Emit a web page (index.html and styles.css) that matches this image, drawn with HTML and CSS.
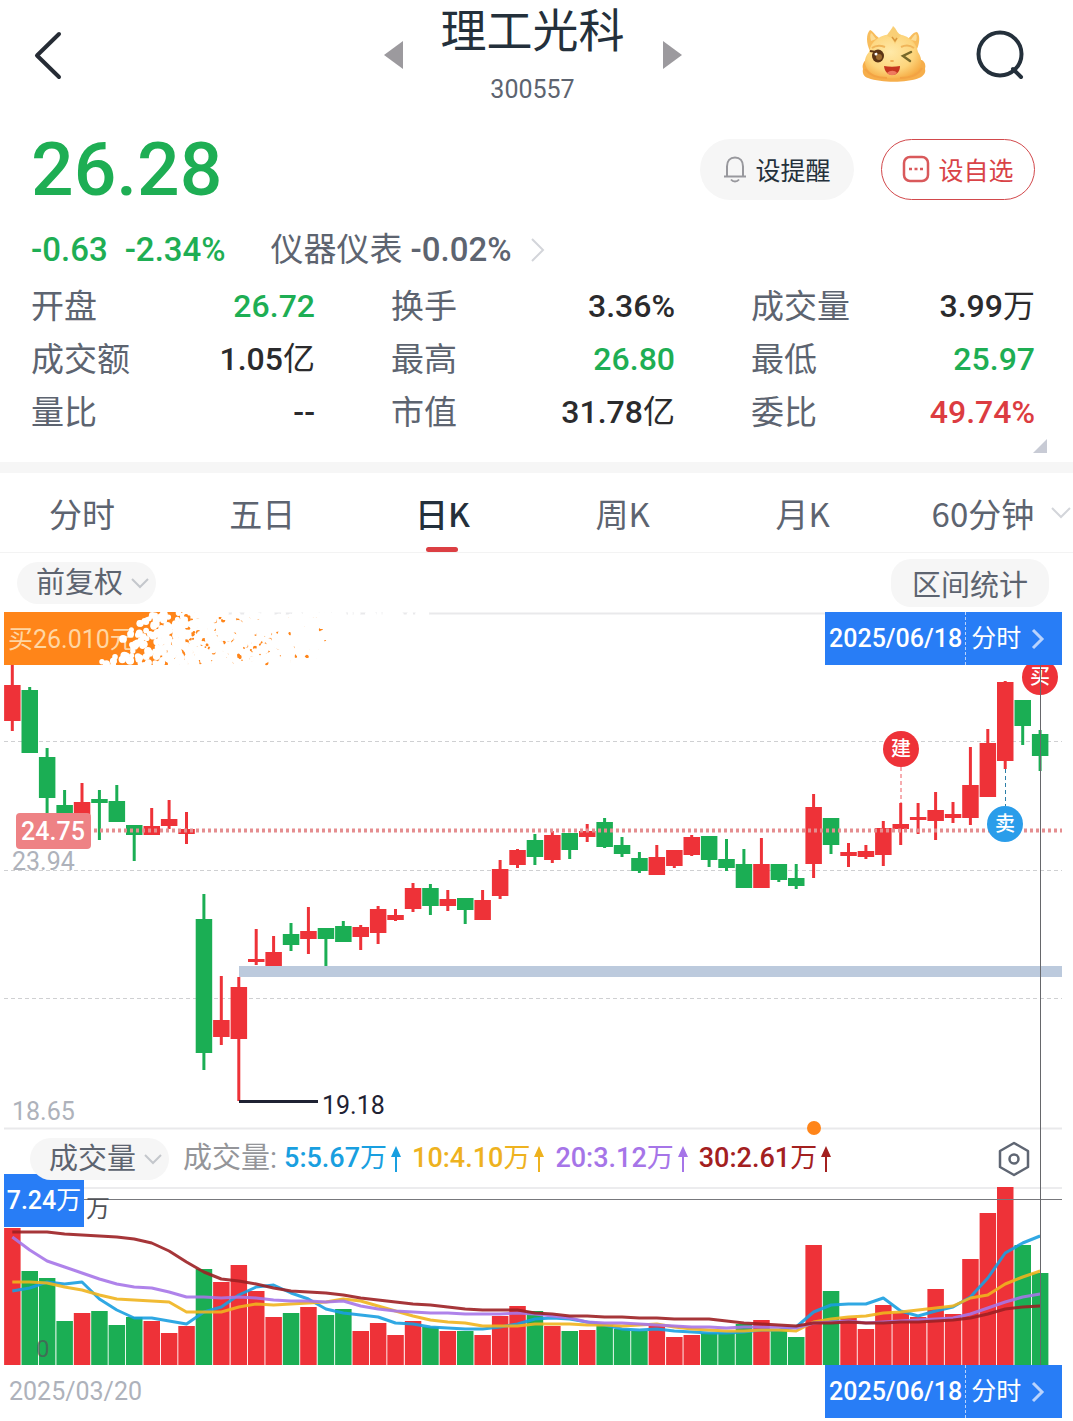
FILE: index.html
```html
<!DOCTYPE html>
<html lang="zh-CN">
<head>
<meta charset="utf-8">
<meta name="viewport" content="width=device-width, initial-scale=1">
<title>理工光科 300557</title>
<link rel="stylesheet" href="styles.css">
</head>
<body>
<header class="topbar">
  <button class="icon-btn back" aria-label="返回">
    <svg width="32" height="52" viewBox="0 0 32 52" fill="none" stroke="#262c35" stroke-width="4" stroke-linecap="round" stroke-linejoin="round"><path d="M27 5 5 26.500 27 48"/></svg>
  </button>
  <div class="stock">
    <button class="icon-btn" aria-label="上一只"><svg width="20" height="28" viewBox="0 0 20 28"><path d="M19 0v28L0 14z" fill="#9c9a9e"/></svg></button>
    <div class="stock-name">
      <h1>理工光科</h1>
      <p>300557</p>
    </div>
    <button class="icon-btn" aria-label="下一只"><svg width="20" height="28" viewBox="0 0 20 28"><path d="M1 0v28l19-14z" fill="#9c9a9e"/></svg></button>
  </div>
  <div class="tools">
    <button class="icon-btn" aria-label="助手">
      <svg width="66" height="62" viewBox="0 0 66 62">
        <defs>
          <radialGradient id="face" cx=".45" cy=".4" r=".65"><stop offset="0" stop-color="#ffe9a8"/><stop offset=".65" stop-color="#fdd57c"/><stop offset="1" stop-color="#f6ac45"/></radialGradient>
        </defs>
        <path d="M9 27C5 19 5 10 9 6c3 1 5 5 9 8l-5 12zM56 25c3-7 3-14 0-17-4 0-6 4-9 7l6 10z" fill="#f8bd5c"/>
        <path d="M10 17c-1-4-1-6 0-8 2 1 3 4 5 6zM55 17c1-3 1-5 0-7-2 1-4 4-5 6z" fill="#fbdc96"/>
        <path d="M5 36c-3 2-4 6-3 9-1 4 1 8 5 9 14 5 38 5 51 0 5-2 7-6 6-9 1-4 0-7-3-9z" fill="#f6ae4b"/>
        <path d="M33 10c13 0 22 7 24 18 5 7 4 16-1 20-6 8-40 9-47 0-6-6-7-13-1-20 2-11 11-18 25-18z" fill="url(#face)"/>
        <path d="M26 12c1-4 4-5 6-10 4 3 3 6 8 9l-4 5-2 4-3-6z" fill="#f9cf76"/>
        <path d="M31 13l3 4 2-3" fill="none" stroke="#d9973d" stroke-width="1.500"/>
        <path d="M11 24c4-3 8-3 13-1M40 23c4-2 9-2 13 1" fill="none" stroke="#f0b55a" stroke-width="2"/>
        <ellipse cx="17" cy="32" rx="6" ry="6.500" fill="#5b3414"/>
        <circle cx="18" cy="33" r="3" fill="#9d6a2e"/><circle cx="15" cy="30" r="1.500" fill="#fff"/>
        <path d="M9 27l6 1" stroke="#5b3414" stroke-width="2"/>
        <path d="M50 28l-8 4 7 5" fill="none" stroke="#77682a" stroke-width="2.500" stroke-linecap="round"/>
        <ellipse cx="31" cy="37" rx="2" ry="1" fill="#efa850"/>
        <path d="M23 42c5 1 11 1 16 0 0 12-15 12-16 0z" fill="#c63520"/>
        <path d="M26 49c3-3 8-3 10 0-3 3-7 3-10 0z" fill="#ef7a5e"/>
        <path d="M4 45c5 7 12 9 22 9M61 44c-4 7-12 10-22 10" fill="none" stroke="#f3a344" stroke-width="2"/>
      </svg>
    </button>
    <button class="icon-btn search" aria-label="搜索">
      <svg width="64" height="60" viewBox="0 0 64 60" fill="none" stroke="#24303b" stroke-width="4"><circle cx="31" cy="29" r="21.500"/><path d="M44 44l8 8" stroke-linecap="round"/></svg>
    </button>
  </div>
</header>

<main>
<section class="quote">
  <div class="price-row">
    <strong class="price">26.28</strong>
    <div class="actions">
      <button class="pill-btn">
        <svg width="24" height="28" viewBox="0 0 24 28" fill="none" stroke="#98989d" stroke-width="2"><path d="M1 21.500h22M4 21V11.500C4 6 7 2.500 12 2.500s8 3.500 8 9V21M8 24.500c2 2.500 6 2.500 8 0"/></svg>
        设提醒
      </button>
      <button class="pill-btn outlined">
        <svg width="28" height="28" viewBox="0 0 28 28" fill="none" stroke="#d9595b" stroke-width="2.500"><rect x="2" y="2" width="24" height="24" rx="6"/><path d="M7 14h3M12.500 14h3M18 14h3"/></svg>
        设自选
      </button>
    </div>
  </div>
  <div class="change-row">
    <span class="down">-0.63</span>
    <span class="down">-2.34%</span>
    <a href="#sector" class="sector">仪器仪表<b>-0.02%</b>
      <svg width="16" height="26" viewBox="0 0 16 26" fill="none" stroke="#d3d5da" stroke-width="2"><path d="M2 2l11 11L2 24"/></svg>
    </a>
  </div>
  <dl class="stats">
    <div><dt>开盘</dt><dd class="down">26.72</dd></div>
    <div><dt>换手</dt><dd>3.36%</dd></div>
    <div><dt>成交量</dt><dd>3.99<span>万</span></dd></div>
    <div><dt>成交额</dt><dd>1.05<span>亿</span></dd></div>
    <div><dt>最高</dt><dd class="down">26.80</dd></div>
    <div><dt>最低</dt><dd class="down">25.97</dd></div>
    <div><dt>量比</dt><dd>--</dd></div>
    <div><dt>市值</dt><dd>31.78<span>亿</span></dd></div>
    <div><dt>委比</dt><dd class="up">49.74%</dd></div>
  </dl>
  <button class="icon-btn expand" aria-label="展开"><svg width="14" height="14" viewBox="0 0 14 14"><path d="M14 0v14H0z" fill="#c8cbd5"/></svg></button>
</section>

<nav class="tabs">
  <button>分时</button>
  <button>五日</button>
  <button class="active">日K</button>
  <button>周K</button>
  <button>月K</button>
  <label class="tab-select">
    <select aria-label="分钟周期"><option>60分钟</option></select>
    <svg width="20" height="12" viewBox="0 0 20 12" fill="none" stroke="#d3d5da" stroke-width="2"><path d="M1 1l9 9 9-9"/></svg>
  </label>
</nav>

<div class="toolbar">
  <label class="drop">
    <select aria-label="复权方式"><option>前复权</option></select>
    <svg width="18" height="12" viewBox="0 0 18 12" fill="none" stroke="#c4c7cc" stroke-width="2"><path d="M1 1l8 8 8-8"/></svg>
  </label>
  <button class="range-btn">区间统计</button>
</div>

<section class="chart">
  <div class="plot">
    <svg id="price-plot" viewBox="0 612 1073 518" role="img" aria-label="日K线图">
      <path class="frame" d="M4 613.500H1062M4 1128.500H1062"/>
      <path class="grid" d="M4 741.500H1062M4 998.500H1062"/>
      <rect x="239" y="966" width="823" height="11" fill="#bccadd"/>
      <text class="axis" x="12" y="870">23.94</text>
      <path class="grid" d="M4 870.500H1062"/>
      <g id="candles"></g>
      <path class="last-line" d="M94 830.500H1062"/>
      <rect x="16" y="813" width="75" height="36" rx="4" fill="#ee8285"/>
      <text class="last-label" x="53" y="840">24.75</text>
      <text class="axis" x="12" y="1120">18.65</text>
      <path d="M239 1101.500h79" stroke="#1f2233" stroke-width="3"/>
      <text class="low-label" x="322" y="1114">19.18</text>
      <path d="M901 767v36" stroke="#ee5a60" stroke-dasharray="4 3"/>
      <path d="M1005.500 769v37" stroke="#2c7fa8" stroke-dasharray="4 3"/>
      <g class="marker">
        <circle cx="901" cy="749" r="18" fill="#ee3238"/><text x="901" y="756">建</text>
        <circle cx="1040" cy="677" r="18" fill="#ee3238"/><text x="1040" y="684">买</text>
        <circle cx="1005" cy="824" r="18" fill="#2a9dea"/><text x="1005" y="831">卖</text>
      </g>
      <circle cx="814" cy="1128" r="7" fill="#ff8519"/>
      <rect x="4" y="612" width="182" height="53" fill="#ff8519"/>
      <text class="buy-label" x="8" y="648">买26.010元</text>
      <g id="dissolve"></g>
    </svg>
    <button class="date-tag over"><span>2025/06/18</span><span class="go">分时<svg width="14" height="22" viewBox="0 0 14 22" fill="none" stroke="#b9d3fd" stroke-width="3"><path d="M2 2l9 9-9 9"/></svg></span></button>
  </div>

  <div class="indicator">
    <label class="drop">
      <select aria-label="指标"><option>成交量</option></select>
      <svg width="18" height="12" viewBox="0 0 18 12" fill="none" stroke="#c4c7cc" stroke-width="2"><path d="M1 1l8 8 8-8"/></svg>
    </label>
    <span class="legend-name">成交量:</span>
    <ul class="legend">
      <li class="ma5">5:5.67<span>万</span><svg width="10" height="26" viewBox="0 0 10 26"><path d="M5 0l5 11H6v15H4V11H0z" fill="currentColor"/></svg></li>
      <li class="ma10">10:4.10<span>万</span><svg width="10" height="26" viewBox="0 0 10 26"><path d="M5 0l5 11H6v15H4V11H0z" fill="currentColor"/></svg></li>
      <li class="ma20">20:3.12<span>万</span><svg width="10" height="26" viewBox="0 0 10 26"><path d="M5 0l5 11H6v15H4V11H0z" fill="currentColor"/></svg></li>
      <li class="ma30">30:2.61<span>万</span><svg width="10" height="26" viewBox="0 0 10 26"><path d="M5 0l5 11H6v15H4V11H0z" fill="currentColor"/></svg></li>
    </ul>
    <button class="icon-btn settings" aria-label="指标设置"><svg width="32" height="36" viewBox="0 0 32 36" fill="none" stroke="#5f6673" stroke-width="2.500" stroke-linejoin="round"><path d="M16 2l14 8v16l-14 8-14-8V10z"/><circle cx="16" cy="18" r="4.500"/></svg></button>
  </div>

  <div class="plot volume">
    <svg viewBox="0 1187 1073 178" role="img" aria-label="成交量图">
      <path d="M4 1188H1062" stroke="#ececee" stroke-width="2"/>
      <g id="bars"></g>
      <path d="M84 1199.500H1062" stroke="#77787c"/>
      <g id="averages"></g>
      <text class="unit" x="86" y="1217">万</text>
      <text class="unit zero" x="36" y="1357">0</text>
    </svg>
    <span class="volume-tag">7.24<span>万</span></span>
  </div>
  <div class="crosshair"></div>
</section>

<footer class="dates">
  <time>2025/03/20</time>
  <button class="date-tag"><span>2025/06/18</span><span class="go">分时<svg width="14" height="22" viewBox="0 0 14 22" fill="none" stroke="#b9d3fd" stroke-width="3"><path d="M2 2l9 9-9 9"/></svg></span></button>
</footer>
</main>
<script src="chart.js"></script>
</body>
</html>
```

FILE: styles.css
```css
* { box-sizing: border-box; }
body {
  margin: 0;
  background: #fff;
  color: #5d6470;
  font-family: Roboto, "Noto Sans CJK SC", sans-serif;
  overflow-x: hidden;
}
h1, p, dl, dd, ul { margin: 0; padding: 0; }
ul { list-style: none; }
button, select {
  font: inherit;
  color: inherit;
  border: 0;
  background: none;
  padding: 0;
  margin: 0;
}
select { appearance: none; outline: 0; }
svg { display: block; flex: none; }
.icon-btn { display: flex; }
.down { color: #1eae54; }

.topbar {
  display: grid;
  grid-template-columns: 1fr auto 1fr;
  align-items: center;
  height: 110px;
  padding: 0 40px 0 32px;
}
.stock { display: flex; align-items: center; gap: 37px; }
.stock-name { text-align: center; }
.stock-name h1 {
  font-size: 46px;
  font-weight: 400;
  line-height: 62px;
  color: #24303b;
}
.stock-name p { font-size: 25px; line-height: 40px; padding-top: 8px; }
.tools { display: flex; justify-content: flex-end; align-items: center; gap: 42px; }

.quote { position: relative; padding: 9px 38px 23px 31px; }
.price-row { display: flex; justify-content: space-between; align-items: center; height: 100px; }
.price { font-size: 75px; font-weight: 500; line-height: 100px; color: #1eae54; }
.actions { display: flex; gap: 27px; }
.pill-btn {
  display: flex;
  align-items: center;
  justify-content: center;
  gap: 8px;
  width: 154px;
  height: 61px;
  border-radius: 31px;
  background: #f6f6f6;
  color: #24303b;
  font-size: 25px;
}
.pill-btn.outlined { background: #fff; border: 1px solid #d2494c; color: #d94347; }
.change-row {
  display: flex;
  align-items: baseline;
  gap: 17px;
  height: 61px;
  font-size: 33px;
  font-weight: 500;
  line-height: 61px;
}
.sector {
  display: flex;
  align-items: baseline;
  margin-left: 28px;
  color: inherit;
  font-weight: 400;
  text-decoration: none;
}
.sector b { font-weight: 500; margin: 0 18px 0 8px; }
.sector svg { align-self: center; }
.stats {
  display: grid;
  grid-template-columns: repeat(3, 1fr);
  column-gap: 76px;
  font-size: 33px;
  line-height: 53px;
}
.stats div { display: flex; justify-content: space-between; }
.stats dd { color: #2b2b2d; font-size: 32px; font-weight: 500; }
.stats .down { color: #1eae54; }
.stats .up { color: #dc3c41; }
.stats span, .legend span, .volume-tag span { font-weight: 400; }
.expand { position: absolute; right: 26px; bottom: 9px; }

.tabs {
  display: grid;
  grid-template-columns: repeat(6, 1fr);
  height: 91px;
  margin-left: -8px;
  border-top: 11px solid #f6f6f6;
  border-bottom: 1px solid #f3f3f3;
  font-family: "Noto Sans CJK SC", sans-serif;
  font-size: 33px;
}
.tabs > * { position: relative; text-align: center; }
.tabs .active { color: #24303b; font-weight: 500; }
.tabs .active::after {
  content: "";
  position: absolute;
  bottom: 0;
  left: 50%;
  width: 32px;
  height: 5px;
  margin-left: -16px;
  border-radius: 3px;
  background: #dc3f43;
}
.tab-select select { width: 100%; height: 100%; text-align-last: center; }
.tab-select svg { position: absolute; right: 2px; top: 34px; }

.toolbar {
  display: flex;
  align-items: center;
  justify-content: space-between;
  height: 59px;
  padding: 0 24px 0 17px;
  font-size: 29px;
}
.drop { position: relative; display: flex; font-size: 29px; line-height: 42px; }
.drop select {
  width: 139px;
  height: 42px;
  padding-left: 19px;
  border-radius: 21px;
  background: #f6f6f6;
}
.drop svg { position: absolute; right: 7px; top: 16px; }
.range-btn { width: 158px; height: 48px; border-radius: 20px; background: #f6f6f6; }

.chart { position: relative; }
.plot { position: relative; }
.plot > svg { width: 100%; height: auto; overflow: visible; }
.frame { stroke: #e9e9eb; stroke-width: 2; }
.grid { stroke: #cfd0d2; stroke-dasharray: 4 3; }
.last-line { stroke: #e58e90; stroke-width: 4; stroke-dasharray: 3 3; }
.axis { font-size: 25px; fill: #aeb2bb; }
.last-label { font-size: 25px; font-weight: 500; fill: #fff; text-anchor: middle; }
.low-label { font-size: 25px; fill: #1f2233; }
.marker text { font-size: 20px; font-weight: 500; fill: #fff; text-anchor: middle; }
.buy-label { font-size: 25px; fill: #ffd6a3; }
.unit { font-size: 24px; fill: #505257; }
.zero { fill-opacity: .7; }
.red { fill: #ee3238; stroke: #ee3238; }
.green { fill: #1bae54; stroke: #1bae54; }
.candle path { stroke-width: 3; }
.candle rect, .bar { stroke: none; }
.average { fill: none; stroke-width: 3; stroke-linejoin: round; stroke-opacity: .9; }

.date-tag {
  display: flex;
  align-items: baseline;
  width: 237px;
  height: 53px;
  padding-left: 4px;
  background: #287df6;
  color: #fff;
  font-size: 25px;
  font-weight: 500;
  line-height: 53px;
}
.date-tag.over { position: absolute; top: 0; right: 11px; }
.go {
  display: flex;
  align-items: center;
  height: 53px;
  gap: 10px;
  margin-left: 3px;
  padding-left: 5px;
  border-left: 1px dashed #b9d3fd;
  font-weight: 400;
}

.indicator {
  position: relative;
  z-index: 1;
  display: flex;
  align-items: center;
  height: 57px;
  padding: 0 43px 0 30px;
  line-height: 57px;
}
.legend-name { margin-left: 14px; font-size: 29px; color: #949599; }
.legend { display: flex; gap: 11px; margin-left: 7px; font-size: 27px; font-weight: 500; }
.legend li { display: flex; align-items: baseline; }
.legend svg { align-self: center; margin-left: 4px; }
.ma5 { color: #199fe0; }
.ma10 { color: #eeb21f; }
.ma20 { color: #a675e8; }
.ma30 { color: #a3201f; }
.settings { margin-left: auto; }

.volume-tag {
  position: absolute;
  left: 4px;
  top: -13px;
  width: 80px;
  height: 53px;
  background: #287df6;
  color: #fff;
  font-size: 25px;
  font-weight: 500;
  line-height: 53px;
  text-align: center;
}
.crosshair {
  position: absolute;
  z-index: 2;
  top: 53px;
  bottom: 0;
  left: 96.9%;
  width: 1px;
  background: #66676b;
}
.dates {
  display: flex;
  justify-content: space-between;
  align-items: flex-start;
  height: 56px;
  padding: 0 11px 0 9px;
  font-size: 25px;
  line-height: 53px;
  color: #aeb2bb;
}
```

FILE: chart.js
```js
// Each session: direction, high, body top, body bottom, low, volume top (plot units).
const sessions = [
  ["r",660,685,721,731,1228],["g",687,690,753,753,1271],["g",748,757,798,830,1278],["g",790,805,816,816,1321],
  ["r",783,802,816,816,1313],["g",790,799,803,840,1311],["g",785,801,822,822,1325],["g",825,825,835,861,1317],
  ["r",808,826,835,835,1321],["r",800,819,826,829,1333],["r",812,829,834,844,1326],["g",894,919,1053,1070,1269],
  ["r",976,1020,1037,1045,1282],["r",977,987,1039,1101,1265],["r",929,959,962,965,1291],["r",936,952,966,966,1317],
  ["g",923,934,945,951,1313],["r",907,931,939,954,1307],["g",928,928,939,966,1315],["g",921,926,942,942,1309],
  ["r",925,927,937,950,1331],["r",906,909,933,944,1323],["r",909,915,920,921,1335],["r",883,888,909,912,1321],
  ["g",884,888,906,915,1327],["r",890,899,906,911,1331],["g",898,898,910,924,1331],["r",890,900,920,920,1335],
  ["r",860,869,896,899,1316],["r",849,850,865,868,1306],["g",834,840,857,865,1311],["r",831,835,860,863,1326],
  ["g",833,833,850,859,1331],["r",824,831,837,842,1330],["g",818,822,847,848,1325],["g",837,845,854,857,1329],
  ["g",852,858,871,873,1331],["r",845,857,875,875,1325],["r",850,850,866,868,1337],["r",835,837,855,856,1335],
  ["g",836,836,860,867,1333],["g",839,859,868,871,1333],["g",849,864,888,888,1324],["r",838,864,888,888,1320],
  ["g",864,864,880,882,1331],["g",864,878,886,889,1337],["r",794,807,864,878,1245],["g",818,818,845,854,1291],
  ["r",843,852,856,867,1318],["r",845,851,857,859,1329],["r",821,828,855,866,1305],["r",803,824,829,845,1313],
  ["r",803,817,820,834,1317],["r",792,810,821,840,1289],["r",802,814,818,823,1314],["r",747,785,818,825,1259],
  ["r",729,743,797,797,1213],["r",681,682,761,769,1187],["g",700,700,726,745,1245],["g",730,734,756,771,1273]
];

const averages = {
  "#199fe0": [1291,1288,1282,1284,1282,1299,1310,1318,1318,1321,1324,1312,1307,1295,1287,1285,1293,1299,1309,1313,1315,1317,1323,1324,1327,1328,1329,1329,1327,1324,1319,1318,1319,1322,1325,1329,1330,1329,1331,1332,1333,1333,1332,1330,1330,1327,1312,1305,1304,1304,1298,1311,1316,1311,1307,1297,1278,1253,1243,1236],
  "#f0b41e": [1282,1282,1283,1287,1290,1295,1299,1300,1301,1302,1312,1312,1312,1307,1304,1305,1304,1303,1302,1299,1301,1306,1311,1316,1320,1322,1323,1326,1326,1326,1324,1324,1324,1325,1325,1326,1325,1324,1327,1329,1330,1331,1331,1330,1330,1331,1322,1319,1317,1316,1313,1312,1310,1308,1306,1298,1295,1284,1277,1271],
  "#a675e8": [1237,1250,1261,1267,1273,1279,1284,1287,1288,1292,1297,1297,1298,1297,1298,1300,1301,1301,1302,1301,1306,1309,1311,1312,1313,1313,1314,1314,1314,1313,1314,1316,1318,1322,1323,1323,1324,1325,1326,1327,1327,1328,1327,1327,1327,1328,1323,1322,1321,1323,1322,1321,1320,1319,1318,1314,1308,1302,1297,1294],
  "#9c2023": [1232,1232,1232,1234,1235,1236,1237,1239,1243,1251,1262,1272,1279,1281,1284,1288,1291,1292,1293,1295,1298,1300,1302,1304,1305,1307,1309,1310,1310,1310,1313,1314,1316,1316,1317,1317,1318,1318,1319,1319,1319,1321,1323,1324,1325,1326,1323,1323,1322,1323,1323,1322,1322,1321,1320,1318,1314,1309,1307,1306]
};

const center = i => (12.3 + i * 17.42).toFixed(1);
const left = i => (4.1 + i * 17.42).toFixed(1);
const tone = { r: "red", g: "green" };

document.getElementById("candles").innerHTML = sessions.map(([d, hi, top, bottom, lo], i) =>
  `<g class="candle ${tone[d]}"><path d="M${center(i)} ${hi}V${lo}"/><rect x="${left(i)}" y="${top}" width="16.500" height="${bottom - top}"/></g>`
).join("");

document.getElementById("bars").innerHTML = sessions.map((s, i) =>
  `<rect class="bar ${tone[s[0]]}" x="${left(i)}" y="${s[5]}" width="16.500" height="${1365 - s[5]}"/>`
).join("");

document.getElementById("averages").innerHTML = Object.entries(averages).map(([color, ys]) =>
  `<polyline class="average" stroke="${color}" points="${ys.map((y, i) => center(i) + "," + y).join(" ")}"/>`
).join("");

// The buy tag breaks up into particles towards its right edge.
let seed = 7;
const random = () => (seed = (seed * 16807) % 2147483647) / 2147483647;
const dots = [];
const dot = (x, y, r, fill) => dots.push(`<circle cx="${x.toFixed(1)}" cy="${y.toFixed(1)}" r="${r.toFixed(1)}" fill="${fill}"/>`);
for (let i = 0; i < 190; i++) {
  const y = 613 + random() * 53;
  const start = 146 - (y - 612) * 0.9;
  dot(start + Math.pow(random(), 0.7) * (192 - start), y, 2.5 + random() * 1.5, "#fff");
}
for (let i = 0; i < 150; i++) {
  dot(186 + Math.pow(random(), 1.6) * 140, 614 + random() * 50, 0.8 + random() * 1.6, "#ff8519");
}
for (let i = 0; i < 330; i++) {
  dot(182 + random() * 146, 613 + random() * 53, 2.2 + random() * 2, "#fff");
}
for (let i = 0; i < 90; i++) {
  dot(200 + random() * 230, 613 + random() * 2, 2.5, "#fff");
}
document.getElementById("dissolve").innerHTML = dots.join("");
```
